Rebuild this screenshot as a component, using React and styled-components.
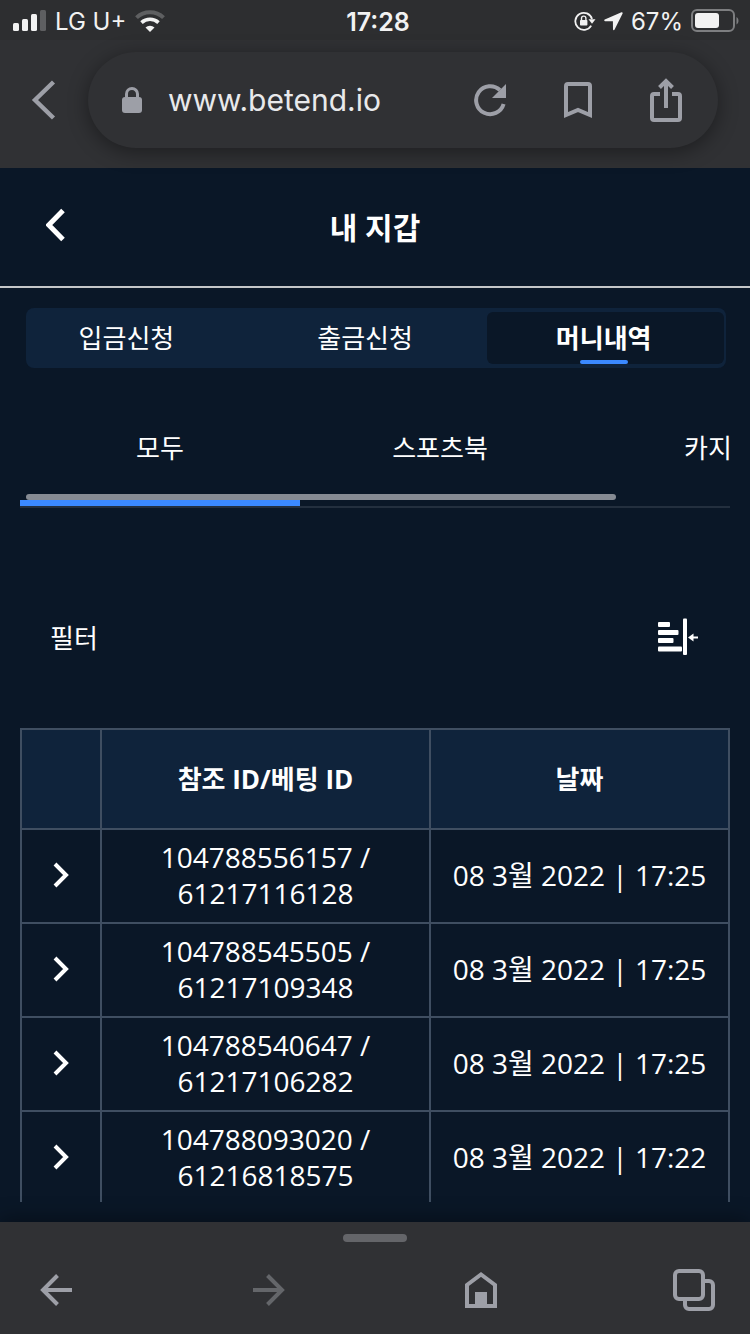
import { useState } from "react";
import styled, { createGlobalStyle } from "styled-components";

const GlobalStyle = createGlobalStyle`
  :root {
    --page: #0a1727;
    --panel: #0f233b;
    --chrome: #303134;
    --chrome-icon: #9d9fa7;
    --line: #3f4e61;
    --accent: #3b89ff;
    --font-text: "Open Sans", "Noto Sans CJK KR", sans-serif;
    --font-system: Inter, "Noto Sans CJK KR", sans-serif;
  }

  * {
    box-sizing: border-box;
  }

  body {
    margin: 0;
    background: var(--page);
    color: #fff;
    font-family: var(--font-text);
    font-size: 26px;
  }

  button {
    border: none;
    padding: 0;
    background: none;
    color: inherit;
    font: inherit;
    cursor: pointer;
  }

  svg {
    display: block;
  }
`;

const Screen = styled.div`
  height: 100vh;
  display: flex;
  flex-direction: column;
  overflow: hidden;
`;

const StatusBar = styled.div`
  display: grid;
  grid-template-columns: 1fr auto 1fr;
  align-items: center;
  height: 40px;
  padding: 0 11px 0 13px;
  background: #2d2e30;
  color: #f2f2f2;
  font-family: var(--font-system);
  font-size: 24px;
  line-height: 40px;
`;

const StatusGroup = styled.div`
  display: flex;
  align-items: center;
  gap: ${({ $gap }) => $gap}px;
  justify-content: ${({ $end }) => ($end ? "flex-end" : "flex-start")};

  span {
    padding-top: 2px;
  }
`;

const Clock = styled.time`
  padding: 2px 0 0 4px;
  font-size: 25px;
  font-weight: 600;
`;

const AddressBar = styled.div`
  display: flex;
  align-items: center;
  padding: 12px 32px 20px 0;
  background: var(--chrome);
  color: var(--chrome-icon);
`;

const ChromeButton = styled.button`
  display: flex;
  align-items: center;
  justify-content: center;
  flex: 0 0 ${({ $width }) => $width || 88}px;
  height: ${({ $height }) => $height || 96}px;
  color: ${({ disabled }) => (disabled ? "#64666a" : "var(--chrome-icon)")};
`;

const Omnibox = styled.div`
  display: flex;
  align-items: center;
  flex: 1;
  min-width: 0;
  height: 96px;
  padding: 0 8px 0 34px;
  border-radius: 48px;
  background: var(--chrome);
  box-shadow: 0 4px 20px rgba(0, 0, 0, 0.4);
`;

const UrlInput = styled.input`
  flex: 1;
  min-width: 0;
  margin-left: 26px;
  padding: 0;
  border: none;
  outline: none;
  background: none;
  color: #e8e9eb;
  font-family: var(--font-system);
  font-size: 30px;
  line-height: 40px;
`;

const Header = styled.header`
  display: grid;
  grid-template-columns: 80px 1fr 80px;
  align-items: center;
  height: 120px;
  padding: 0 16px;
  border-bottom: 2px solid #c4c6c8;
`;

const BackButton = styled.button`
  display: flex;
  justify-content: center;
  padding-bottom: 4px;
`;

const Title = styled.h1`
  margin: 0;
  padding-top: 2px;
  text-align: center;
  font-size: 30px;
  line-height: 40px;
  font-weight: 700;
`;

const Main = styled.main`
  flex: 1;
  min-height: 0;
  display: flex;
  flex-direction: column;
  padding: 20px;
`;

const WalletTabs = styled.div`
  display: flex;
  flex-shrink: 0;
  justify-content: flex-end;
  gap: 2px;
  height: 60px;
  margin: 0 4px 0 6px;
  padding: 4px 2px;
  border-radius: 8px;
  background: var(--panel);
  overflow: hidden;
`;

const WalletTab = styled.button`
  display: flex;
  flex-direction: column;
  align-items: center;
  justify-content: flex-end;
  flex: 0 0 34%;
  padding-right: 4px;
  border-radius: 6px;
  background: ${({ $active }) => ($active ? "var(--page)" : "none")};
  font-weight: ${({ $active }) => ($active ? 700 : 400)};
  line-height: 44px;

  &::after {
    content: "";
    width: 48px;
    height: 4px;
    border-radius: 2px;
    background: ${({ $active }) => ($active ? "var(--accent)" : "none")};
  }
`;

const Categories = styled.div`
  position: relative;
  flex-shrink: 0;
  margin-top: 20px;
  border-bottom: 2px solid #232f3e;
`;

const CategoryList = styled.div`
  display: flex;
  overflow: hidden;
`;

const CategoryTab = styled.button`
  flex: 0 0 280px;
  height: 118px;
  padding-top: 6px;
  border-bottom: 6px solid
    ${({ $active }) => ($active ? "var(--accent)" : "transparent")};
`;

const ScrollThumb = styled.div`
  position: absolute;
  left: 6px;
  right: 114px;
  bottom: 6px;
  height: 6px;
  border-radius: 3px;
  background: #868b93;
`;

const FilterRow = styled.div`
  display: flex;
  flex-shrink: 0;
  align-items: center;
  justify-content: space-between;
  height: 98px;
  margin: 80px 0 42px;
  padding: 0 32px 0 30px;
`;

const TableWrap = styled.div`
  flex: 1;
  min-height: 0;
  overflow: hidden;
`;

const Table = styled.table`
  width: 100%;
  table-layout: fixed;
  border-collapse: collapse;
  text-align: center;

  th,
  td {
    border: 2px solid var(--line);
  }
`;

const HeadCell = styled.th`
  width: ${({ $width }) => $width || "auto"};
  height: 100px;
  padding: 0;
  background: var(--panel);
  font-weight: 700;
  line-height: 36px;
`;

const Cell = styled.td`
  padding: 9px 0 11px;
  font-size: 28px;
  line-height: 36px;
`;

const Reference = styled.span`
  display: block;
`;

const ExpandButton = styled.button`
  display: flex;
  justify-content: center;
  width: 100%;
`;

const BottomBar = styled.footer`
  flex-shrink: 0;
  padding: 12px 0 0;
  background: var(--chrome);
  box-shadow: 0 -2px 20px rgba(0, 0, 0, 0.4);
`;

const Handle = styled.div`
  width: 64px;
  height: 8px;
  margin: 0 auto;
  border-radius: 4px;
  background: #646569;
`;

const BottomNav = styled.nav`
  display: flex;
  justify-content: space-between;
  height: 92px;
  padding: 4px 34px 0;
`;

const SignalIcon = () => (
  <svg width="33" height="22" viewBox="0 0 33 22" fill="currentColor">
    <rect x="0" y="13" width="6" height="8" rx="1.5" />
    <rect x="9" y="9" width="6" height="12" rx="1.5" />
    <rect x="18" y="4" width="6" height="17" rx="1.5" />
    <rect x="27" y="0" width="6" height="21" rx="1.5" opacity="0.25" />
  </svg>
);

const WifiIcon = () => (
  <svg width="30" height="22" viewBox="0 0 30 22" fill="none" stroke="currentColor">
    <path d="M1.5 7.6a19.500 19.500 0 0 1 27 0" strokeWidth="4" opacity="0.25" />
    <path d="M6.500 12.600a12.600 12.600 0 0 1 17 0" strokeWidth="3.600" />
    <path d="M10.500 17.600a6.500 6.500 0 0 1 9 0L15 22z" fill="currentColor" stroke="none" />
  </svg>
);

const RotationLockIcon = () => (
  <svg width="22" height="20" viewBox="0 0 22 20" fill="none" stroke="currentColor">
    <path d="M17.2 14.6A8.5 8.5 0 1 1 18 8" strokeWidth="1.8" />
    <path d="M14.5 8.2h7l-3.5 4.6z" fill="currentColor" stroke="none" />
    <rect x="6" y="9" width="7.4" height="5.6" rx="0.8" fill="currentColor" stroke="none" />
    <path d="M7.5 9.5V7.3a2.2 2.2 0 0 1 4.4 0v2.2" strokeWidth="1.4" />
  </svg>
);

const LocationIcon = () => (
  <svg width="19" height="19" viewBox="0 0 19 19" fill="currentColor">
    <path d="M17.5 0.3 0.8 7.6c-.9.4-.6 1.6.3 1.6l7.8.1.1 8c0 1 1.2 1.2 1.6.3L18.6 1.4c.3-.8-.4-1.4-1.1-1.1z" />
  </svg>
);

const BatteryIcon = () => (
  <svg width="48" height="24" viewBox="0 0 48 24">
    <rect x="1" y="1" width="42" height="21" rx="5" fill="none" stroke="#7d7e80" strokeWidth="2" />
    <rect x="4" y="4" width="24" height="15" rx="3" fill="#f2f2f2" />
    <path d="M45.5 8v7.5c2.6-1.3 2.6-6.2 0-7.5z" fill="#7d7e80" />
  </svg>
);

const ChromeBackIcon = () => (
  <svg width="26" height="40" viewBox="0 0 26 40" fill="none" stroke="currentColor" strokeWidth="4.4">
    <path d="M22.500 2 4 20l18.500 18" />
  </svg>
);

const LockIcon = () => (
  <svg width="20" height="26" viewBox="0 0 20 26" color="#9d9fa7">
    <rect y="10" width="20" height="16" rx="3" fill="currentColor" />
    <path d="M4.5 12V7a5.5 5.5 0 0 1 11 0v5" fill="none" stroke="currentColor" strokeWidth="3" />
  </svg>
);

const ReloadIcon = () => (
  <svg width="34" height="34" viewBox="0 0 34 34" fill="none" stroke="currentColor">
    <path d="M30.600 21A14 14 0 1 1 27 7.200" strokeWidth="4" />
    <path d="M33 1v14H19z" fill="currentColor" stroke="none" />
  </svg>
);

const BookmarkIcon = () => (
  <svg width="28" height="36" viewBox="0 0 28 36" fill="none" stroke="currentColor" strokeWidth="4">
    <path d="M2 33V4a2 2 0 0 1 2-2h20a2 2 0 0 1 2 2v29l-12-5z" />
  </svg>
);

const ShareIcon = () => (
  <svg width="32" height="44" viewBox="0 0 32 44" fill="none" stroke="currentColor" strokeWidth="4">
    <path d="M10 16H4a2 2 0 0 0-2 2v22a2 2 0 0 0 2 2h24a2 2 0 0 0 2-2V18a2 2 0 0 0-2-2h-6M16 30V3M9.5 9.5 16 3l6.500 6.500" />
  </svg>
);

const FilterIcon = () => (
  <svg width="40" height="38" viewBox="0 0 40 38" fill="#fff">
    <rect x="0" y="4" width="12" height="5" rx="1" />
    <rect x="0" y="12" width="20.500" height="5" rx="1" />
    <rect x="0" y="20" width="15.500" height="5" rx="1" />
    <rect x="0" y="28.500" width="24" height="5" rx="1" />
    <rect x="25" y="0.500" width="4" height="36.500" rx="1" />
    <path d="M30 19.500 35.500 15.500v3H40v2h-4.500v3z" />
  </svg>
);

const PageBackIcon = () => (
  <svg width="20" height="34" viewBox="0 0 20 34" fill="none" stroke="#fff" strokeWidth="5">
    <path d="M17 2.500 2.800 17 17 31.500" />
  </svg>
);

const ExpandIcon = () => (
  <svg width="16" height="26" viewBox="0 0 16 26" fill="none" stroke="#fff" strokeWidth="4">
    <path d="M2 2l11 11L2 24" />
  </svg>
);

const ArrowIcon = ({ forward }) => (
  <svg width="32" height="32" viewBox="0 0 32 32" fill="none" stroke="currentColor" strokeWidth="4">
    <path d={forward ? "M0 16h29M14.500 1.500 29 16 14.500 30.500" : "M32 16H3M17.500 1.500 3 16l14.500 14.500"} />
  </svg>
);

const HomeIcon = () => (
  <svg width="32" height="36" viewBox="0 0 32 36" fill="none" stroke="currentColor" strokeWidth="4">
    <path d="M2 34V13L16 2.500 30 13v21z" />
    <path d="M10 20h12v14H10z" fill="currentColor" stroke="none" />
  </svg>
);

const TabsIcon = () => (
  <svg width="42" height="42" viewBox="0 0 42 42" fill="none" stroke="currentColor" strokeWidth="4">
    <rect x="2" y="2" width="28" height="28" rx="4" />
    <path d="M30 12h6a4 4 0 0 1 4 4v20a4 4 0 0 1-4 4H16a4 4 0 0 1-4-4v-6" />
  </svg>
);

const walletTabs = ["입금신청", "출금신청", "머니내역"];
const categories = ["모두", "스포츠북", "카지노"];

const bets = [
  { reference: "104788556157", bet: "61217116128", date: "08 3월 2022 | 17:25" },
  { reference: "104788545505", bet: "61217109348", date: "08 3월 2022 | 17:25" },
  { reference: "104788540647", bet: "61217106282", date: "08 3월 2022 | 17:25" },
  { reference: "104788093020", bet: "61216818575", date: "08 3월 2022 | 17:22" },
];

const App = () => {
  const [walletTab, setWalletTab] = useState("머니내역");
  const [category, setCategory] = useState("모두");

  return (
    <Screen>
      <GlobalStyle />
      <StatusBar>
        <StatusGroup $gap={9}>
          <SignalIcon />
          <span>LG U+</span>
          <WifiIcon />
        </StatusGroup>
        <Clock>17:28</Clock>
        <StatusGroup $gap={8} $end>
          <RotationLockIcon />
          <LocationIcon />
          <span>67%</span>
          <BatteryIcon />
        </StatusGroup>
      </StatusBar>

      <AddressBar>
        <ChromeButton aria-label="뒤로">
          <ChromeBackIcon />
        </ChromeButton>
        <Omnibox>
          <LockIcon />
          <UrlInput type="text" aria-label="주소" defaultValue="www.betend.io" />
          <ChromeButton aria-label="새로고침">
            <ReloadIcon />
          </ChromeButton>
          <ChromeButton aria-label="북마크">
            <BookmarkIcon />
          </ChromeButton>
          <ChromeButton aria-label="공유">
            <ShareIcon />
          </ChromeButton>
        </Omnibox>
      </AddressBar>

      <Header>
        <BackButton aria-label="뒤로">
          <PageBackIcon />
        </BackButton>
        <Title>내 지갑</Title>
      </Header>

      <Main>
        <WalletTabs>
          {walletTabs.map((tab) => (
            <WalletTab key={tab} $active={tab === walletTab} onClick={() => setWalletTab(tab)}>
              {tab}
            </WalletTab>
          ))}
        </WalletTabs>

        <Categories>
          <CategoryList>
            {categories.map((item) => (
              <CategoryTab key={item} $active={item === category} onClick={() => setCategory(item)}>
                {item}
              </CategoryTab>
            ))}
          </CategoryList>
          <ScrollThumb />
        </Categories>

        <FilterRow>
          <span>필터</span>
          <button aria-label="필터">
            <FilterIcon />
          </button>
        </FilterRow>

        <TableWrap>
          <Table>
            <thead>
              <tr>
                <HeadCell $width="80px" />
                <HeadCell>참조 ID/베팅 ID</HeadCell>
                <HeadCell $width="299px">날짜</HeadCell>
              </tr>
            </thead>
            <tbody>
              {bets.map((item) => (
                <tr key={item.reference}>
                  <Cell>
                    <ExpandButton aria-label="자세히">
                      <ExpandIcon />
                    </ExpandButton>
                  </Cell>
                  <Cell>
                    <Reference>{item.reference} /</Reference>
                    <Reference>{item.bet}</Reference>
                  </Cell>
                  <Cell>{item.date}</Cell>
                </tr>
              ))}
            </tbody>
          </Table>
        </TableWrap>
      </Main>

      <BottomBar>
        <Handle />
        <BottomNav>
          <ChromeButton $width={44} $height={88} aria-label="이전">
            <ArrowIcon />
          </ChromeButton>
          <ChromeButton $width={44} $height={88} aria-label="다음" disabled>
            <ArrowIcon forward />
          </ChromeButton>
          <ChromeButton $width={44} $height={88} aria-label="홈">
            <HomeIcon />
          </ChromeButton>
          <ChromeButton $width={44} $height={88} aria-label="탭">
            <TabsIcon />
          </ChromeButton>
        </BottomNav>
      </BottomBar>
    </Screen>
  );
};

export default App;
